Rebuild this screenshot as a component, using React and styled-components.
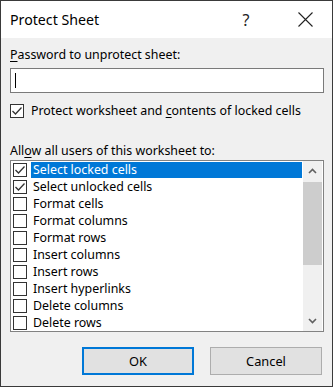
import React from "react";
import styled, { createGlobalStyle } from "styled-components";

const GlobalStyle = createGlobalStyle`
  html, body {
    margin: 0;
    padding: 0;
    background: #ffffff;
  }
  * {
    box-sizing: border-box;
  }
`;

const Window = styled.div`
  width: 333px;
  height: 387px;
  border: 1px solid #3a3a3a;
  background: #f0f0f0;
  display: flex;
  flex-direction: column;
  font-family: "Segoe UI", "Noto Sans", "Liberation Sans", sans-serif;
  font-size: 12.4px;
  color: #000;
`;

const TitleBar = styled.div`
  height: 37px;
  background: #ffffff;
  display: flex;
  align-items: center;
  padding-left: 9px;
  padding-right: 4px;
`;

const Title = styled.div`
  font-size: 14.2px;
  flex: 1;
`;

const Controls = styled.div`
  display: flex;
  gap: 13px;
`;

const ControlButton = styled.div`
  width: 46px;
  height: 30px;
  display: flex;
  align-items: center;
  justify-content: center;
  font-size: 16px;
  color: #222;
`;

const Body = styled.div`
  flex: 1;
  display: flex;
  flex-direction: column;
  padding: 9px 8px 10px 9px;
`;

const Label = styled.div`
  line-height: 16px;
  height: 16px;
  margin-top: ${({ $top }) => $top || 0}px;
`;

const U = styled.span`
  text-decoration: underline;
  text-underline-offset: 2px;
`;

const TextBox = styled.div`
  margin-top: 5px;
  height: 25px;
  background: #fff;
  border: 1px solid #7a7a7a;
  display: flex;
  align-items: center;
  padding-left: 4px;
`;

const Caret = styled.div`
  width: 1px;
  height: 15px;
  background: #000;
`;

const CheckRow = styled.div`
  margin-top: 10px;
  display: flex;
  align-items: center;
  gap: 7px;
  height: 15px;
`;

const Box = styled.div`
  width: 14px;
  height: 14px;
  flex: none;
  border: 1px solid #333;
  background: #fff;
  display: flex;
  align-items: center;
  justify-content: center;
`;

const ListBox = styled.div`
  margin-top: 1px;
  height: 172px;
  background: #fff;
  border: 1px solid #828282;
  display: flex;
`;

const Items = styled.div`
  flex: 1;
  padding: 1px 0 0 2px;
  display: flex;
  flex-direction: column;
`;

const Item = styled.div`
  height: 17px;
  display: flex;
  align-items: center;
`;

const ItemText = styled.div`
  flex: 1;
  height: 16px;
  line-height: 16px;
  margin-left: 4px;
  padding-left: 2px;
  background: ${({ $selected }) => ($selected ? "#0078d7" : "transparent")};
  color: ${({ $selected }) => ($selected ? "#fff" : "#000")};
`;

const ScrollBar = styled.div`
  width: 19px;
  background: #f0f0f0;
  margin: 0 1px 0 1px;
  display: flex;
  flex-direction: column;
`;

const Arrow = styled.div`
  height: 20px;
  display: flex;
  align-items: center;
  justify-content: center;
`;

const Track = styled.div`
  flex: 1;
  display: flex;
  flex-direction: column;
`;

const Thumb = styled.div`
  height: 83px;
  background: #cdcdcd;
  margin-top: 1px;
`;

const Buttons = styled.div`
  margin-top: 15px;
  display: flex;
  justify-content: flex-end;
  gap: 16px;
  padding-right: 2px;
`;

const Button = styled.div`
  width: 112px;
  height: 28px;
  background: #e1e1e1;
  border: ${({ $default }) => ($default ? "2px solid #0078d7" : "1px solid #adadad")};
  display: flex;
  align-items: center;
  justify-content: center;
  font-size: 12.8px;
`;

const Check = () => (
  <svg width="12" height="12" viewBox="0 0 12 12">
    <polyline points="1.5,6 4.5,9 10.5,2.5" fill="none" stroke="#333" strokeWidth="1.3" />
  </svg>
);

const Chevron = ({ down }) => (
  <svg width="9" height="6" viewBox="0 0 9 6">
    <polyline
      points={down ? "1,1 4.5,4.5 8,1" : "1,5 4.5,1.5 8,5"}
      fill="none"
      stroke="#606060"
      strokeWidth="1.6"
    />
  </svg>
);

const items = [
  { label: "Select locked cells", checked: true, selected: true },
  { label: "Select unlocked cells", checked: true },
  { label: "Format cells" },
  { label: "Format columns" },
  { label: "Format rows" },
  { label: "Insert columns" },
  { label: "Insert rows" },
  { label: "Insert hyperlinks" },
  { label: "Delete columns" },
  { label: "Delete rows" },
];

export default function App() {
  return (
    <>
      <GlobalStyle />
      <Window>
        <TitleBar>
          <Title>Protect Sheet</Title>
          <Controls>
            <ControlButton>?</ControlButton>
            <ControlButton>
              <svg width="15" height="15" viewBox="0 0 15 15">
                <path d="M0.5 0.5 L14.5 14.5 M14.5 0.5 L0.5 14.5" stroke="#222" strokeWidth="1.1" />
              </svg>
            </ControlButton>
          </Controls>
        </TitleBar>
        <Body>
          <Label>
            <U>P</U>assword to unprotect sheet:
          </Label>
          <TextBox>
            <Caret />
          </TextBox>
          <CheckRow>
            <Box>
              <Check />
            </Box>
            <span>
              Protect worksheet and <U>c</U>ontents of locked cells
            </span>
          </CheckRow>
          <Label $top={25}>
            All<U>o</U>w all users of this worksheet to:
          </Label>
          <ListBox>
            <Items>
              {items.map((it) => (
                <Item key={it.label}>
                  <Box>{it.checked && <Check />}</Box>
                  <ItemText $selected={it.selected}>{it.label}</ItemText>
                </Item>
              ))}
            </Items>
            <ScrollBar>
              <Arrow>
                <Chevron />
              </Arrow>
              <Track>
                <Thumb />
              </Track>
              <Arrow>
                <Chevron down />
              </Arrow>
            </ScrollBar>
          </ListBox>
          <Buttons>
            <Button $default>OK</Button>
            <Button>Cancel</Button>
          </Buttons>
        </Body>
      </Window>
    </>
  );
}
